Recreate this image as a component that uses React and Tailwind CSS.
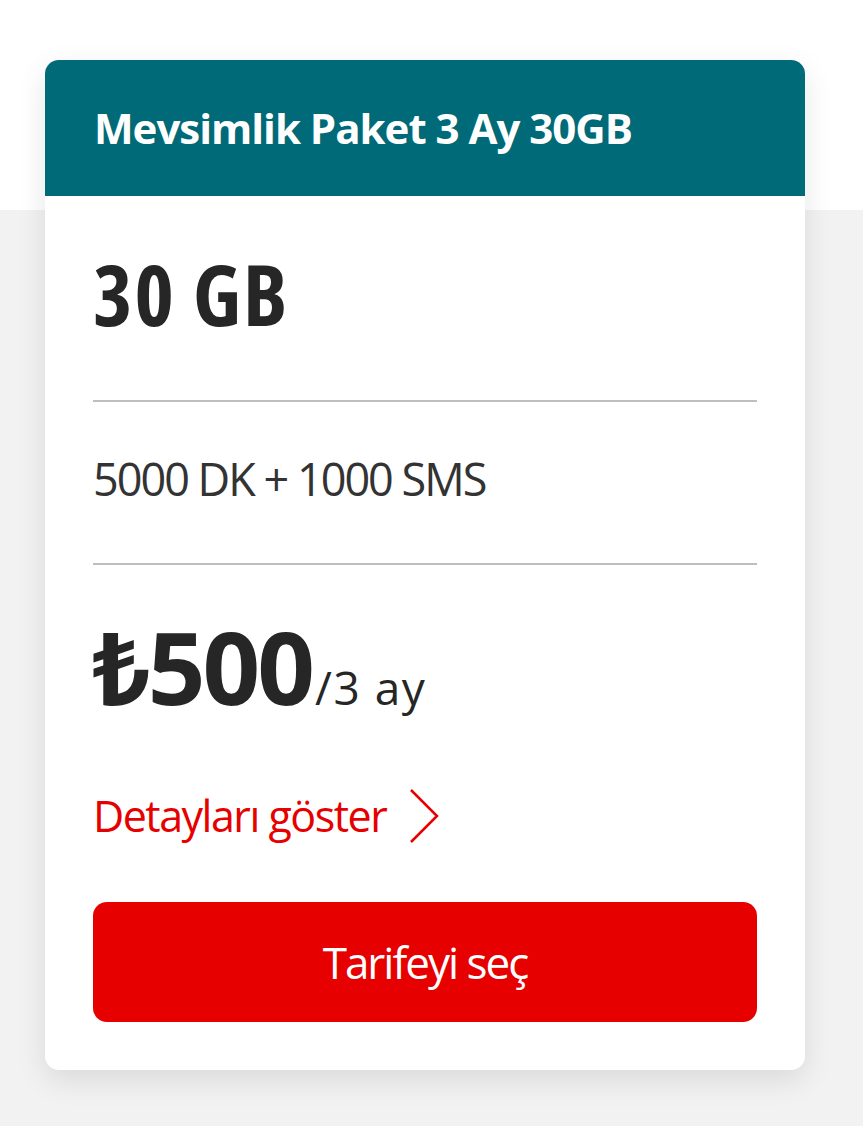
import React from 'react';

const font = { fontFamily: '"Open Sans", "Noto Sans", sans-serif' };

function Chevron() {
  return (
    <svg width="32" height="56" viewBox="0 0 32 56" fill="none" className="ml-[22px]">
      <polyline points="3,2 29,28 3,54" stroke="#e60000" strokeWidth="2.5" strokeLinejoin="miter" />
    </svg>
  );
}

export default function App() {
  return (
    <div
      className="min-h-[1126px] w-full bg-[linear-gradient(to_bottom,#ffffff_210px,#f2f2f2_210px)] pt-[60px] pb-[56px]"
      style={font}
    >
      <div className="ml-[45px] w-[760px] rounded-[14px] bg-white shadow-[0_10px_30px_rgba(0,0,0,0.10)] overflow-hidden">
        <div className="h-[136px] bg-[#006a78] flex items-center px-[49px]">
          <h2 className="text-white font-bold text-[42px] leading-[44px] tracking-[-1px] font-stretch-[90%]">
            Mevsimlik Paket 3 Ay 30GB
          </h2>
        </div>

        <div className="px-[48px] pb-[48px]">
          <div className="pt-[56px] pb-[64px] text-[84px] leading-[84px] font-bold text-[#262626] tracking-[2px] font-stretch-[75%]">
            30 GB
          </div>
          <div className="h-[2px] bg-[#bebebe]" />

          <div className="pt-[53px] pb-[60px] text-[45px] leading-[48px] text-[#333333] tracking-[-2px] font-stretch-[90%]">
            5000 DK + 1000 SMS
          </div>
          <div className="h-[2px] bg-[#bebebe]" />

          <div className="pt-[49px] flex items-baseline text-[#262626]">
            <span className="text-[101px] leading-[105px] font-bold tracking-[-3px] font-stretch-[90%]">₺500</span>
            <span className="text-[46px] leading-[44px] ml-[3px] tracking-[1.5px]">/3 ay</span>
          </div>

          <div className="mt-[69px] flex items-center text-[#e60000]">
            <span className="text-[43px] leading-[44px] tracking-[-1.5px] font-stretch-[90%]">Detayları göster</span>
            <Chevron />
          </div>

          <button className="mt-[58px] w-full h-[120px] rounded-[14px] bg-[#e60000] text-white text-[44px] tracking-[-2px] font-stretch-[90%] flex items-center justify-center">
            Tarifeyi seç
          </button>
        </div>
      </div>
    </div>
  );
}
